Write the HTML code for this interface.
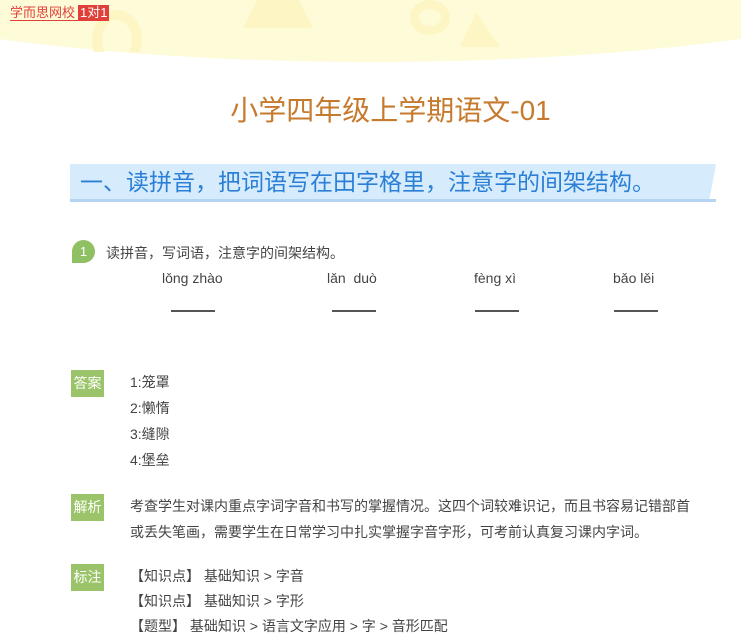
<!DOCTYPE html><html><head><meta charset="utf-8"><style>
body{margin:0;width:741px;height:631px;overflow:hidden;background:#fff;font-family:"Liberation Sans","Noto Sans CJK SC",sans-serif;color:#333;position:relative}
.a{position:absolute;white-space:nowrap}
.lab{position:absolute;left:71px;width:33px;height:27px;background:#9bc46a;color:#fff;font-size:14px;line-height:27px;text-align:center}
.t{font-size:14px;color:#444}
.ln{position:absolute;top:310px;width:44px;height:2px;background:#555}
</style></head><body>
<div class="a" style="left:-330px;top:-240px;width:1400px;height:302px;border-radius:50%;background:#fefbd8"></div>
<div class="a" style="left:92px;top:10px;width:50px;height:60px;border-radius:50%;border:10px solid #fdf6c4;box-sizing:border-box;clip-path:inset(0 0 30% 0)"></div>
<div class="a" style="left:243px;top:0;width:70px;height:28px;background:#fdf6c4;clip-path:polygon(20% 0,80% 0,100% 100%,0 100%)"></div>
<div class="a" style="left:410px;top:0;width:40px;height:35px;border-radius:50%;border:9px solid #fdf6c4;box-sizing:border-box"></div>
<div class="a" style="left:460px;top:12px;width:40px;height:35px;background:#fdf6c4;clip-path:polygon(40% 0,100% 100%,0 100%)"></div>
<div class="a" style="left:10px;top:5px;font-size:13px;color:#e0403a;line-height:15px;border-bottom:1px solid #e0403a">学而思网校<span style="background:#e0403a;color:#fff;padding:0 2px;margin-left:3px">1对1</span></div>
<div class="a" style="left:20px;width:741px;top:89px;text-align:center;font-size:28px;color:#c67a2e">小学四年级上学期语文-01</div>
<div class="a" style="left:70px;top:164px;width:646px;height:37px;background:#d6ebfb;clip-path:polygon(0 0,100% 0,99% 95%,0 95%)"></div>
<div class="a" style="left:70px;top:199px;width:646px;height:3px;background:#b3d5f3"></div>
<div class="a" style="left:80px;top:166px;font-size:23px;line-height:32px;color:#2b7fd6">一、读拼音，把词语写在田字格里，注意字的间架结构。</div>
<div class="a" style="left:72px;top:240px;width:23px;height:23px;border-radius:50% 50% 50% 0;background:#8fc063;color:#fff;font-size:13px;text-align:center;line-height:23px">1</div>
<div class="a t" style="left:106px;top:243px">读拼音，写词语，注意字的间架结构。</div>
<div class="a t" style="left:162px;top:270px">lǒng zhào</div>
<div class="a t" style="left:327px;top:270px">lǎn&nbsp; duò</div>
<div class="a t" style="left:474px;top:270px">fèng xì</div>
<div class="a t" style="left:613px;top:270px">bǎo lěi</div>
<div class="ln" style="left:171px"></div><div class="ln" style="left:332px"></div><div class="ln" style="left:475px"></div><div class="ln" style="left:614px"></div>
<div class="lab" style="top:370px">答案</div>
<div class="a t" style="left:130px;top:369px;line-height:26px">1:笼罩<br>2:懒惰<br>3:缝隙<br>4:堡垒</div>
<div class="lab" style="top:494px">解析</div>
<div class="a t" style="left:130px;top:493px;line-height:26px">考查学生对课内重点字词字音和书写的掌握情况。这四个词较难识记，而且书容易记错部首<br>或丢失笔画，需要学生在日常学习中扎实掌握字音字形，可考前认真复习课内字词。</div>
<div class="lab" style="top:564px">标注</div>
<div class="a t" style="left:130px;top:564px;line-height:25px">【知识点】 基础知识 &gt; 字音<br>【知识点】 基础知识 &gt; 字形<br>【题型】 基础知识 &gt; 语言文字应用 &gt; 字 &gt; 音形匹配</div>
</body></html>
